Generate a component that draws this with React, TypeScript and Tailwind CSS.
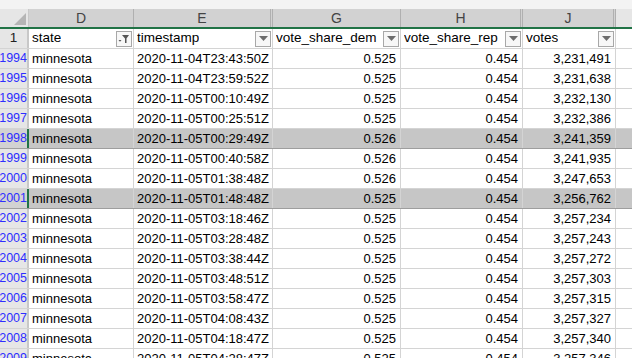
import React from 'react';

const cols = [
  { key: 'D', width: 'w-[105px]', label: 'state', dbl: false },
  { key: 'E', width: 'w-[139px]', label: 'timestamp', dbl: true },
  { key: 'G', width: 'w-[128px]', label: 'vote_share_dem', dbl: false },
  { key: 'H', width: 'w-[122px]', label: 'vote_share_rep', dbl: true },
  { key: 'J', width: 'w-[93px]', label: 'votes', dbl: true },
];

const rows: [number, string, string, string, string][] = [
  [1994, '2020-11-04T23:43:50Z', '0.525', '0.454', '3,231,491'],
  [1995, '2020-11-04T23:59:52Z', '0.525', '0.454', '3,231,638'],
  [1996, '2020-11-05T00:10:49Z', '0.525', '0.454', '3,232,130'],
  [1997, '2020-11-05T00:25:51Z', '0.525', '0.454', '3,232,386'],
  [1998, '2020-11-05T00:29:49Z', '0.526', '0.454', '3,241,359'],
  [1999, '2020-11-05T00:40:58Z', '0.526', '0.454', '3,241,935'],
  [2000, '2020-11-05T01:38:48Z', '0.526', '0.454', '3,247,653'],
  [2001, '2020-11-05T01:48:48Z', '0.525', '0.454', '3,256,762'],
  [2002, '2020-11-05T03:18:46Z', '0.525', '0.454', '3,257,234'],
  [2003, '2020-11-05T03:28:48Z', '0.525', '0.454', '3,257,243'],
  [2004, '2020-11-05T03:38:44Z', '0.525', '0.454', '3,257,272'],
  [2005, '2020-11-05T03:48:51Z', '0.525', '0.454', '3,257,303'],
  [2006, '2020-11-05T03:58:47Z', '0.525', '0.454', '3,257,315'],
  [2007, '2020-11-05T04:08:43Z', '0.525', '0.454', '3,257,327'],
  [2008, '2020-11-05T04:18:47Z', '0.525', '0.454', '3,257,340'],
  [2009, '2020-11-05T04:28:47Z', '0.525', '0.454', '3,257,346'],
];

const selected = [1998, 2001];

// little dropdown box in the header cells
const FilterButton = ({ active }: { active?: boolean }) => (
  <div className="w-[16px] h-[16px] border border-[#a8a8a8] bg-[#f7f7f7] flex items-center justify-center shrink-0">
    {active ? (
      <svg width="12" height="10" viewBox="0 0 12 10">
        <path d="M4 1h7L8.5 4.5V9H7V4.5z" fill="#555" />
        <path d="M0.5 6h3L2 7.8z" fill="#555" />
      </svg>
    ) : (
      <svg width="9" height="5" viewBox="0 0 9 5">
        <path d="M0 0h9L4.5 5z" fill="#6d6d6d" />
      </svg>
    )}
  </div>
);

const App = () => {
  return (
    <div
      className="w-[632px] h-[358px] overflow-hidden bg-white text-black whitespace-nowrap"
      style={{ fontFamily: '"Liberation Sans", Arial, sans-serif' }}
    >
      {/* strip above column letters */}
      <div className="h-[9px] bg-[#f3f3f3]" />

      {/* column letters */}
      <div className="flex h-[20px] bg-[#e6e6e6] border-b-2 border-[#217346] text-[14px] text-[#444]">
        <div className="w-[29px] shrink-0 bg-[#e6e6e6] border-r border-[#c8c8c8] relative">
          <svg className="absolute right-[2px] bottom-[2px]" width="12" height="12" viewBox="0 0 12 12">
            <path d="M12 0V12H0z" fill="#b5b5b5" />
          </svg>
        </div>
        {cols.map((c) => (
          <div
            key={c.key}
            className={`${c.width} shrink-0 flex items-center justify-center bg-[#d2d2d2] ${
              c.dbl ? 'border-r-[3px] border-double border-[#b0b0b0]' : 'border-r border-[#b0b0b0]'
            }`}
          >
            {c.key}
          </div>
        ))}
        <div className="flex-1 bg-[#e6e6e6]" />
      </div>

      {/* header row 1 */}
      <div className="flex h-[20px] border-b border-[#d4d4d4] text-[13.5px]">
        <div className="w-[29px] shrink-0 bg-[#e6e6e6] border-r-2 border-[#c8c8c8] flex items-center justify-center text-[#222]">
          1
        </div>
        {cols.map((c, i) => (
          <div
            key={c.key}
            className={`${c.width} shrink-0 flex items-center justify-between pl-[3px] pr-[1px] border-r border-[#d4d4d4]`}
          >
            <span className="overflow-hidden">{c.label}</span>
            <FilterButton active={i === 0} />
          </div>
        ))}
        <div className="flex-1" />
      </div>

      {/* data rows */}
      {rows.map(([num, ts, dem, rep, votes]) => {
        const sel = selected.includes(num);
        const fill = sel ? 'bg-[#c6c6c6]' : '';
        return (
          <div
            key={num}
            className={`flex h-[20px] text-[13px] border-b ${sel ? 'border-[#9e9e9e]' : 'border-[#d4d4d4]'}`}
          >
            <div
              className={`w-[29px] shrink-0 flex items-center justify-end text-[12.5px] text-[#2e2eff] border-r-2 ${
                sel ? 'bg-[#d2d2d2] border-[#217346]' : 'bg-[#e6e6e6] border-[#c8c8c8]'
              }`}
            >
              {num}
            </div>
            <div className={`w-[105px] shrink-0 flex items-center pl-[3px] border-r border-[#d4d4d4] ${fill}`}>
              minnesota
            </div>
            <div className={`w-[139px] shrink-0 flex items-center pl-[3px] border-r border-[#d4d4d4] ${fill}`}>
              {ts}
            </div>
            <div className={`w-[128px] shrink-0 flex items-center justify-end pr-[4px] border-r border-[#d4d4d4] ${fill}`}>
              {dem}
            </div>
            <div className={`w-[122px] shrink-0 flex items-center justify-end pr-[4px] border-r border-[#d4d4d4] ${fill}`}>
              {rep}
            </div>
            <div className={`w-[93px] shrink-0 flex items-center justify-end pr-[4px] border-r border-[#d4d4d4] ${fill}`}>
              {votes}
            </div>
            <div className={`flex-1 ${fill}`} />
          </div>
        );
      })}
    </div>
  );
};

export default App;
